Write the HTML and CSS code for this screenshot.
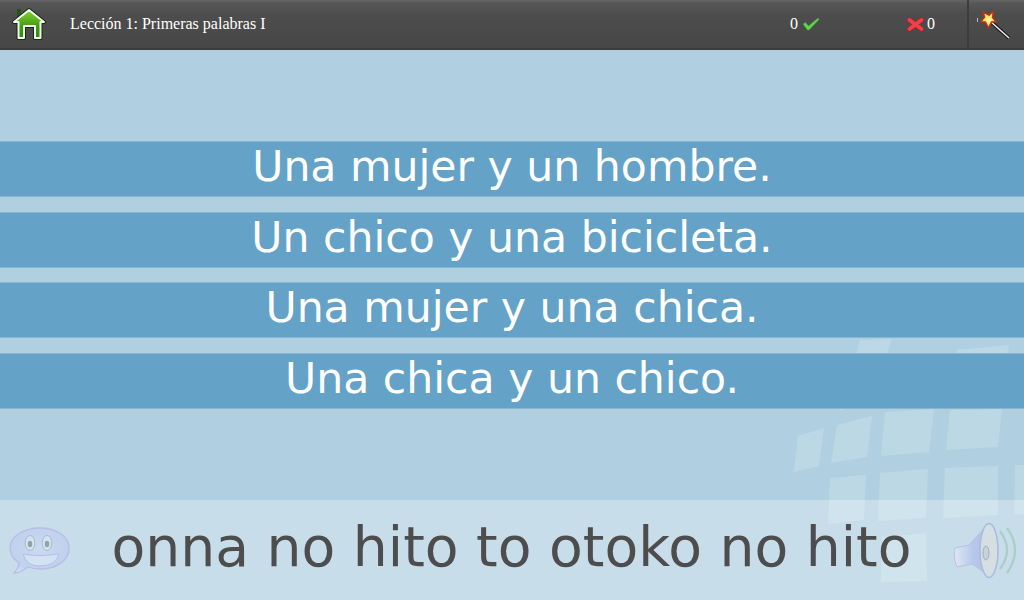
FILE: index.html
```html
<!DOCTYPE html>
<html lang="es">
<head>
<meta charset="utf-8">
<title>Lección 1</title>
<link rel="stylesheet" href="styles.css">
</head>
<body>
<div class="app">
  <svg class="watermark" viewBox="0 0 1024 600" width="1024" height="600" aria-hidden="true">
    <g class="tile">
      <polygon points="798,436 824,428 819,466 794,472"/>
      <polygon points="837,425 872,416 867,457 831,463"/>
      <polygon points="885,412 934,409 929,452 881,456"/>
      <polygon points="950,410 1002,409 998,447 946,450"/>
      <polygon points="830,478 866,475 864,520 828,524"/>
      <polygon points="880,473 928,469 926,518 878,521"/>
      <polygon points="945,468 998,466 998,515 943,518"/>
      <polygon points="1015,465 1024,465 1024,514 1014,515"/>
      <polygon points="882,537 926,533 927,581 881,582"/>
      <polygon points="860,340 892,339 870,400 840,411"/>
      <polygon points="957,350 1009,345 1003,395 950,400"/>
    </g>
  </svg>
  <header class="topbar">
    <button class="home">
      <svg width="36" height="34" viewBox="0 0 36 34">
        <defs><linearGradient id="hg" x1="0" y1="0" x2="0" y2="1"><stop offset="0" stop-color="#86d42e"/><stop offset=".6" stop-color="#3f9a16"/><stop offset="1" stop-color="#2f8a12"/></linearGradient></defs>
        <rect x="6" y="2" width="4" height="8" fill="#26521a"/>
        <path d="M18 3 L33 15 L29.5 15 L29.5 31 L24 31 L24 19 L13 19 L13 31 L7.5 31 L7.5 15 L3 15 Z" fill="url(#hg)" stroke="#142b10" stroke-width="4" stroke-linejoin="round"/>
        <path d="M18 3 L33 15 L29.5 15 L29.5 31 L24 31 L24 19 L13 19 L13 31 L7.5 31 L7.5 15 L3 15 Z" fill="url(#hg)" stroke="#f4faee" stroke-width="2" stroke-linejoin="round"/>
      </svg>
    </button>
    <div class="title">Lección 1: Primeras palabras I</div>
    <div class="score score-ok"><span>0</span>
      <svg width="18" height="14" viewBox="0 0 18 14"><path d="M1 7 L3.5 5.5 L6.5 9 L16 1 L17 2.5 L7 13 L5.5 13 Z" fill="#62d64c" stroke="#3f9e34" stroke-width=".6" stroke-linejoin="round"/></svg>
    </div>
    <div class="score score-ko">
      <svg width="17" height="15" viewBox="0 0 17 15"><path d="M2.5 3 L14.5 12 M14.5 3 L2.5 12" stroke="#b51a24" stroke-width="5" stroke-linecap="round"/><path d="M2.5 3 L14.5 12 M14.5 3 L2.5 12" stroke="#f0414a" stroke-width="3.6" stroke-linecap="round"/></svg>
      <span>0</span>
    </div>
    <button class="wand">
      <svg width="36" height="36" viewBox="0 0 36 36">
        <defs><radialGradient id="st" cx=".55" cy=".55" r=".6"><stop offset="0" stop-color="#fff8b0"/><stop offset=".7" stop-color="#fcd53c"/><stop offset="1" stop-color="#f6a92c"/></radialGradient></defs>
        <path d="M13 15 L32 32" stroke="#111" stroke-width="3.6"/>
        <path d="M13 15 L32 32" stroke="#eee" stroke-width="1.6"/>
        <path d="M16.3 5 L15.6 11.5 L19 15.7 L14.5 16 L11.3 22 L8.5 16 L3.7 15.7 L7.6 11 L5.7 5.7 L12 9.2 Z" fill="url(#st)" stroke="#b8341a" stroke-width="1.5" stroke-linejoin="round"/>
        <rect x="0" y="12" width="1" height="4" fill="#9cc4e0"/>
      </svg>
    </button>
  </header>
  <main class="choices">
    <div class="choice">Una mujer y un hombre.</div>
    <div class="choice">Un chico y una bicicleta.</div>
    <div class="choice">Una mujer y una chica.</div>
    <div class="choice">Una chica y un chico.</div>
  </main>
  <footer class="prompt">
    <svg class="smile" width="62" height="48" viewBox="0 0 62 48">
      <defs><radialGradient id="bg1" cx=".5" cy=".45" r=".65"><stop offset="0" stop-color="#cbdaf2"/><stop offset=".75" stop-color="#c0d0ee"/><stop offset="1" stop-color="#d8e4f4"/></radialGradient></defs>
      <path d="M31 2 C47 2 60 10 60 22 C60 35 47 43 31 43 C27 43 23 42.5 19 41 C15 44 10 47 5 47 C8 44 10 40 10 37 C4 33 1 28 1 22 C1 10 15 2 31 2 Z" fill="url(#bg1)" stroke="#b9bde6" stroke-width="1.3"/>
      <ellipse cx="21" cy="17" rx="4.8" ry="7.5" fill="#d6e3ee" stroke="#a8bcc4"/>
      <ellipse cx="38" cy="17" rx="4.8" ry="7.5" fill="#d6e3ee" stroke="#a8bcc4"/>
      <ellipse cx="21" cy="18" rx="2.2" ry="3.2" fill="#8fa3ad"/>
      <ellipse cx="38" cy="18" rx="2.2" ry="3.2" fill="#8fa3ad"/>
      <path d="M14 28 Q30 31 50 28 Q47 40 31 40 Q17 40 14 28 Z" fill="#d2e2f3" stroke="#b9bde6"/>
    </svg>
    <div class="phrase">onna no hito to otoko no hito</div>
    <svg class="speaker" width="64" height="58" viewBox="0 0 64 58">
      <defs><linearGradient id="sg" x1="0" y1="0" x2="1" y2="0"><stop offset="0" stop-color="#dfe8f5"/><stop offset=".5" stop-color="#b8c8ea"/><stop offset="1" stop-color="#aebde0"/></linearGradient></defs>
      <path d="M48 10 Q62 29 48 48 M55 7 Q71 29 55 52" fill="none" stroke="#a9cfc3" stroke-width="2.2"/>
      <path d="M3 27 L17 24 L36 3 L39 56 L20 43 L5 46 C2 40 2 33 3 27 Z" fill="url(#sg)" stroke="#b6c2e2" stroke-width="1"/>
      <ellipse cx="37" cy="29.5" rx="9" ry="27" fill="#d5dfe2" stroke="#a9bde0" stroke-width="1.6"/>
      <ellipse cx="34" cy="32" rx="3" ry="7" fill="#c6d2dc" stroke="#9fb1bf"/>
    </svg>
  </footer>
</div>
</body>
</html>
```
FILE: styles.css
```css
* { box-sizing: border-box; }
html, body { margin: 0; height: 100%; }
.app {
  position: relative;
  width: 1024px;
  height: 600px;
  overflow: hidden;
  display: flex;
  flex-direction: column;
  background: #b0cfe1;
  font-family: "DejaVu Sans", sans-serif;
}
.watermark { position: absolute; left: 0; top: 0; }
.tile polygon { fill: #bcd8e5; }
.topbar {
  position: relative;
  height: 50px;
  display: flex;
  align-items: center;
  background: linear-gradient(#666 0, #575757 3px, #4d4d4d 14px, #474747 100%);
  border-bottom: 2px solid #3c3c3c;
  color: #fff;
}
.home, .wand {
  border: 0;
  padding: 0;
  background: none;
  display: flex;
  align-items: center;
  justify-content: center;
}
.home { width: 58px; height: 48px; }
.title {
  margin-left: 12px;
  width: 720px;
  font: 16px "Liberation Serif", serif;
}
.score { display: flex; align-items: center; font: 16px "Liberation Serif", serif; gap: 4px; }
.score-ok { width: 115px; }
.score-ko { width: 62px; gap: 3px; padding-left: 2px; }
.wand { width: 57px; height: 48px; border-left: 2px solid #3c3c3c; }
.wand svg { margin-right: 3px; }
.choices {
  position: relative;
  flex: 1;
  display: flex;
  flex-direction: column;
  gap: 14.67px;
  padding-top: 91px;
}
.choice {
  height: 56px;
  display: flex;
  align-items: center;
  justify-content: center;
  background: rgba(94, 158, 197, .93);
  border-top: 1px solid #8ab5d1;
  border-bottom: 1px solid #8ab5d1;
  color: #fff;
  font-size: 42.6px;
  padding-bottom: 6px;
}
.prompt {
  position: relative;
  height: 100px;
  display: flex;
  align-items: center;
  background: rgba(255, 255, 255, .3);
  color: #4d4d4d;
}
.smile { margin-left: 9px; flex: none; }
.phrase {
  flex: 1;
  text-align: center;
  font-size: 55.2px;
  padding-bottom: 6px;
}
.speaker { margin-right: 8px; flex: none; }
```
